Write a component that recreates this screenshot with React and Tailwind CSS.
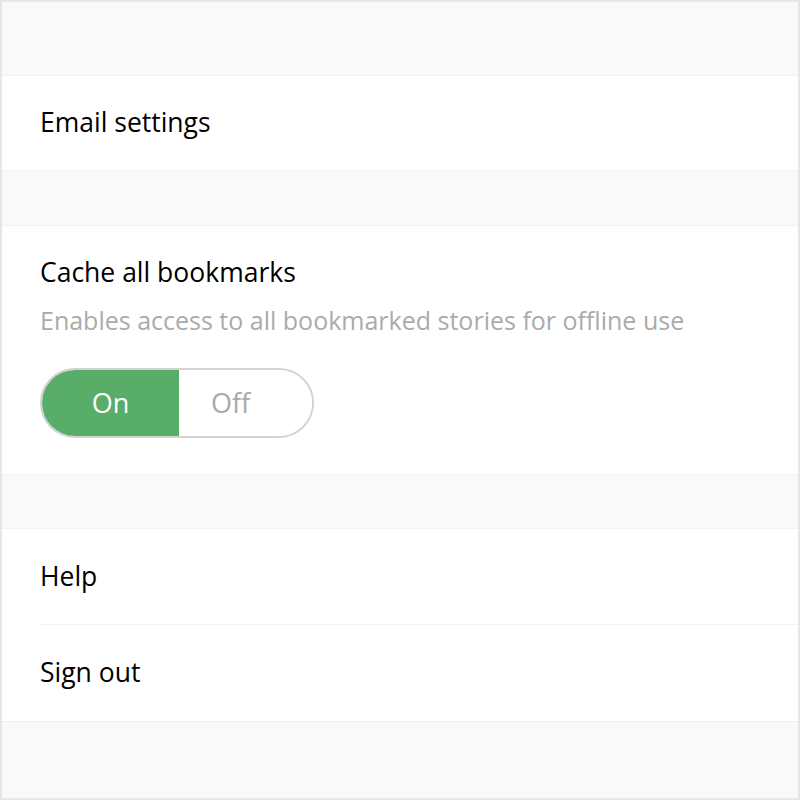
import React, { useState } from 'react';

function Row({ label, divider }) {
  return (
    <div className="h-[96px] flex items-center">
      <div className={`flex-1 h-full flex items-center ml-[38px] ${divider ? 'border-b border-[#f1f1f1]' : ''}`}>
        <span className="text-[26.5px] text-black">{label}</span>
      </div>
    </div>
  );
}

export default function App() {
  const [cache, setCache] = useState(true);

  return (
    <div
      className="w-[800px] h-[800px] border-2 border-[#e6e6e6] bg-[#f9f9f9] flex flex-col"
      style={{ fontFamily: '"Open Sans", "Noto Sans", sans-serif' }}
    >
      <div className="h-[73px]" />

      <div className="bg-white border-y border-[#f1f1f1]">
        <div className="h-[94px] flex items-center pl-[38px]">
          <span className="text-[26.5px] text-black">Email settings</span>
        </div>
      </div>

      <div className="h-[54px]" />

      <div className="bg-white border-y border-[#f1f1f1] h-[250px] pl-[38px] pt-[30px]">
        <div className="text-[26.5px] leading-[32px] text-black">Cache all bookmarks</div>
        <div className="text-[25px] leading-[32px] text-[#ababab] mt-[16px]">
          Enables access to all bookmarked stories for offline use
        </div>
        <div className="mt-[32px] flex w-[274px] h-[70px] rounded-full border-2 border-[#d2d2d2] overflow-hidden">
          <button
            onClick={() => setCache(true)}
            className={`w-[137px] h-full flex items-center justify-center text-[27px] ${cache ? 'bg-[#58ad69] text-white' : 'bg-white text-[#a9a9a9]'}`}
          >
            On
          </button>
          <button
            onClick={() => setCache(false)}
            className={`flex-1 h-full flex items-center pl-[32px] text-[27px] ${!cache ? 'bg-[#58ad69] text-white' : 'bg-white text-[#a9a9a9]'}`}
          >
            Off
          </button>
        </div>
      </div>

      <div className="h-[53px]" />

      <div className="bg-white border-y border-[#f1f1f1]">
        <Row label="Help" divider />
        <Row label="Sign out" />
      </div>
    </div>
  );
}
